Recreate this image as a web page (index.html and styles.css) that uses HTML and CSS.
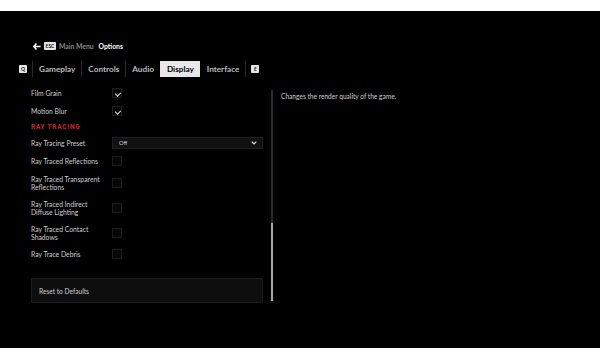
FILE: index.html
```html
<!DOCTYPE html>
<html lang="en">
<head>
    <meta charset="UTF-8">
    <meta name="viewport" content="width=device-width, initial-scale=1.0">
    <title>Options</title>
    <link rel="stylesheet" href="styles.css">
</head>
<body>

    <div class="screen">

        <!-- Breadcrumb -->
        <nav class="crumbs">
            <svg class="back" width="8" height="7" viewBox="0 0 8 7">
                <path d="M3.5 0.5 L0.8 3.5 L3.5 6.5 M1 3.5 H7.5" stroke="#fff" stroke-width="1.5" fill="none"/>
            </svg>
            <span class="key">ESC</span>
            <span class="crumb">Main Menu</span>
            <span class="crumb current">Options</span>
        </nav>

        <!-- Tabs -->
        <div class="tabs">
            <span class="key key-sq">Q</span>
            <span class="tab sep">Gameplay</span>
            <span class="tab sep">Controls</span>
            <span class="tab sep">Audio</span>
            <span class="tab active">Display</span>
            <span class="tab">Interface</span>
            <span class="tab-end"><span class="key key-sq">E</span></span>
        </div>

        <main class="content">
            <section class="settings">
                <div class="row">
                    <span class="label">Film Grain</span>
                    <span class="check on"></span>
                </div>
                <div class="row">
                    <span class="label">Motion Blur</span>
                    <span class="check on"></span>
                </div>
                <h3 class="group">RAY TRACING</h3>
                <div class="row">
                    <span class="label">Ray Tracing Preset</span>
                    <div class="select">
                        <span>Off</span>
                        <svg width="6" height="4" viewBox="0 0 6 4">
                            <path d="M0.7 0.7 L3 3 L5.3 0.7" stroke="#ddd" stroke-width="1.2" fill="none"/>
                        </svg>
                    </div>
                </div>
                <div class="row">
                    <span class="label">Ray Traced Reflections</span>
                    <span class="check"></span>
                </div>
                <div class="row tall">
                    <span class="label">Ray Traced Transparent Reflections</span>
                    <span class="check"></span>
                </div>
                <div class="row tall">
                    <span class="label">Ray Traced Indirect Diffuse Lighting</span>
                    <span class="check"></span>
                </div>
                <div class="row tall">
                    <span class="label">Ray Traced Contact Shadows</span>
                    <span class="check"></span>
                </div>
                <div class="row">
                    <span class="label">Ray Trace Debris</span>
                    <span class="check"></span>
                </div>
                <button class="reset">Reset to Defaults</button>
            </section>

            <div class="scrollbar"><div class="thumb"></div></div>

            <aside class="desc">
                <p>Changes the render quality of the game.</p>
            </aside>
        </main>

    </div>

</body>
</html>
```

FILE: styles.css
```css
* {
    margin: 0;
    padding: 0;
    box-sizing: border-box;
}

body {
    background-color: #fff;
    font-family: 'Lato', 'Liberation Sans', sans-serif;
    color: #ddd;
}

/* Letterboxed game screen */
.screen {
    margin-top: 11px;
    height: 337px;
    background-color: #000;
    padding-top: 31px;
}

/* Breadcrumb */
.crumbs {
    display: flex;
    align-items: center;
    height: 8px;
    padding-left: 33px;
    font-size: 6.8px;
    font-weight: 700;
}

.back {
    margin-right: 3px;
}

.key {
    display: inline-flex;
    align-items: center;
    justify-content: center;
    background-color: #e6e6e6;
    color: #111;
    font-size: 5px;
    font-weight: 700;
    height: 8px;
    padding: 0 1.5px;
    border-radius: 1px;
    margin-right: 3px;
}

.crumb {
    color: #8a8a8a;
    margin-right: 5px;
}

.crumb.current {
    color: #fff;
}

/* Tabs */
.tabs {
    display: flex;
    align-items: center;
    height: 16px;
    margin-top: 11px;
    padding-left: 19px;
    font-size: 8.2px;
    font-weight: 700;
}

.key-sq {
    width: 8px;
    height: 8px;
    padding: 0;
    margin-right: 5px;
}

.tab {
    height: 16px;
    line-height: 16px;
    padding: 0 6px;
    color: #bbb;
    border-left: 1px solid transparent;
}

.tab.sep {
    border-left-color: #2a2a2a;
}

.tab.active {
    background-color: #e8e8e8;
    color: #000;
}

.tab-end {
    display: flex;
    align-items: center;
    height: 16px;
    padding-left: 5px;
    border-left: 1px solid #2a2a2a;
}

/* Content */
.content {
    display: grid;
    grid-template-columns: 232px 2px 1fr;
    column-gap: 8px;
    margin-top: 7px;
    padding-left: 31px;
}

.settings {
    display: flex;
    flex-direction: column;
}

.row {
    display: grid;
    grid-template-columns: 81px 1fr;
    align-items: center;
    height: 18px;
    font-size: 6.8px;
    color: #cfcfcf;
}

.row.tall {
    height: 25px;
}

.label {
    line-height: 8px;
    padding-right: 10px;
}

.check {
    width: 10px;
    height: 10px;
    border: 1px solid #1e1e1e;
    background-color: #070707;
    position: relative;
}

.check.on::after {
    content: "";
    position: absolute;
    left: 2.5px;
    top: 1.5px;
    width: 2.5px;
    height: 4px;
    border-right: 1.2px solid #eee;
    border-bottom: 1.2px solid #eee;
    transform: rotate(45deg);
}

.group {
    height: 14px;
    line-height: 14px;
    color: #d3202c;
    font-family: 'Roboto', sans-serif;
    font-size: 6.4px;
    font-weight: 700;
    letter-spacing: 0.8px;
}

.select {
    display: flex;
    align-items: center;
    justify-content: space-between;
    height: 12px;
    padding: 0 5px 0 6px;
    background-color: #111;
    border: 1px solid #1f1f1f;
    color: #ddd;
    font-size: 5.5px;
}

.reset {
    margin-top: 15px;
    height: 25px;
    text-align: left;
    padding-left: 7px;
    background-color: #0e0e0e;
    border: 1px solid #1c1c1c;
    color: #cfcfcf;
    font-family: 'Lato', sans-serif;
    font-size: 6.6px;
}

/* Scrollbar */
.scrollbar {
    margin-top: 6px;
    height: 211px;
    background-color: #2c2c2c;
    display: flex;
    flex-direction: column;
    justify-content: flex-end;
}

.thumb {
    height: 78px;
    background-color: #a8a8a8;
}

.desc {
    padding-top: 8px;
    font-size: 6.6px;
    color: #cfcfcf;
}
```
